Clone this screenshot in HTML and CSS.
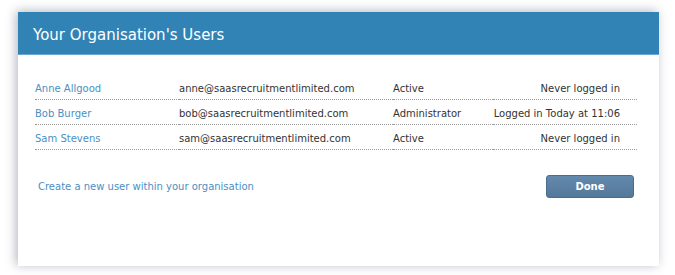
FILE: index.html
```html
<!DOCTYPE html>
<html lang="en">
<head>
  <meta charset="UTF-8" />
  <title>Your Organisation's Users</title>
  <link rel="stylesheet" href="styles.css">
</head>
<body>
  <div class="dialog">
    <div class="dialog-header">
      <h2>Your Organisation's Users</h2>
    </div>

    <div class="dialog-body">
      <table class="users">
        <tr>
          <td class="name"><a href="#">Anne Allgood</a></td>
          <td class="email">anne@saasrecruitmentlimited.com</td>
          <td class="role">Active</td>
          <td class="login">Never logged in</td>
        </tr>
        <tr>
          <td class="name"><a href="#">Bob Burger</a></td>
          <td class="email">bob@saasrecruitmentlimited.com</td>
          <td class="role">Administrator</td>
          <td class="login">Logged in Today at 11:06</td>
        </tr>
        <tr>
          <td class="name"><a href="#">Sam Stevens</a></td>
          <td class="email">sam@saasrecruitmentlimited.com</td>
          <td class="role">Active</td>
          <td class="login">Never logged in</td>
        </tr>
      </table>

      <div class="actions">
        <a href="#" class="create">Create a new user within your organisation</a>
        <button class="done">Done</button>
      </div>
    </div>
  </div>
</body>
</html>
```

FILE: styles.css
```css
* { box-sizing: border-box; }

body {
  margin: 0;
  padding: 12px 16px 9px 18px;
  background: #fff;
  font-family: 'DejaVu Sans', sans-serif;
  font-size: 10px;
  color: #333;
}

.dialog {
  width: 641px;
  height: 254px;
  background: #fff;
  box-shadow: -2px -1px 10px rgba(40, 50, 80, 0.35);
}

.dialog-header {
  height: 43px;
  background: #3283b5;
  border-bottom: 1px solid #6aa6cf;
  padding: 4px 15px 0;
  display: flex;
  align-items: center;
}

h2 {
  margin: 0;
  font-size: 15px;
  font-weight: normal;
  color: #fff;
}

.dialog-body {
  padding: 19px 22px 0 17px;
}

.users {
  width: 100%;
  border-collapse: collapse;
}

.users td {
  height: 25px;
  padding: 4px 0 0;
  border-bottom: 1px dotted #9a9a9a;
  white-space: nowrap;
}

.users a {
  color: #4a8fc4;
  text-decoration: none;
}

.name { width: 144px; }
.email { width: 214px; }
.role { width: 100px; }
.login { text-align: right; padding-right: 17px !important; }

.actions {
  display: flex;
  justify-content: space-between;
  align-items: center;
  padding: 25px 3px 0 3px;
}

.create {
  color: #4a8fc4;
  text-decoration: none;
}

.done {
  width: 88px;
  height: 23px;
  border: 1px solid #4a6d8d;
  border-radius: 3px;
  background: linear-gradient(#6389ac, #54789b);
  color: #fff;
  font-family: 'DejaVu Sans', sans-serif;
  font-size: 10px;
  font-weight: bold;
  cursor: pointer;
}
```
